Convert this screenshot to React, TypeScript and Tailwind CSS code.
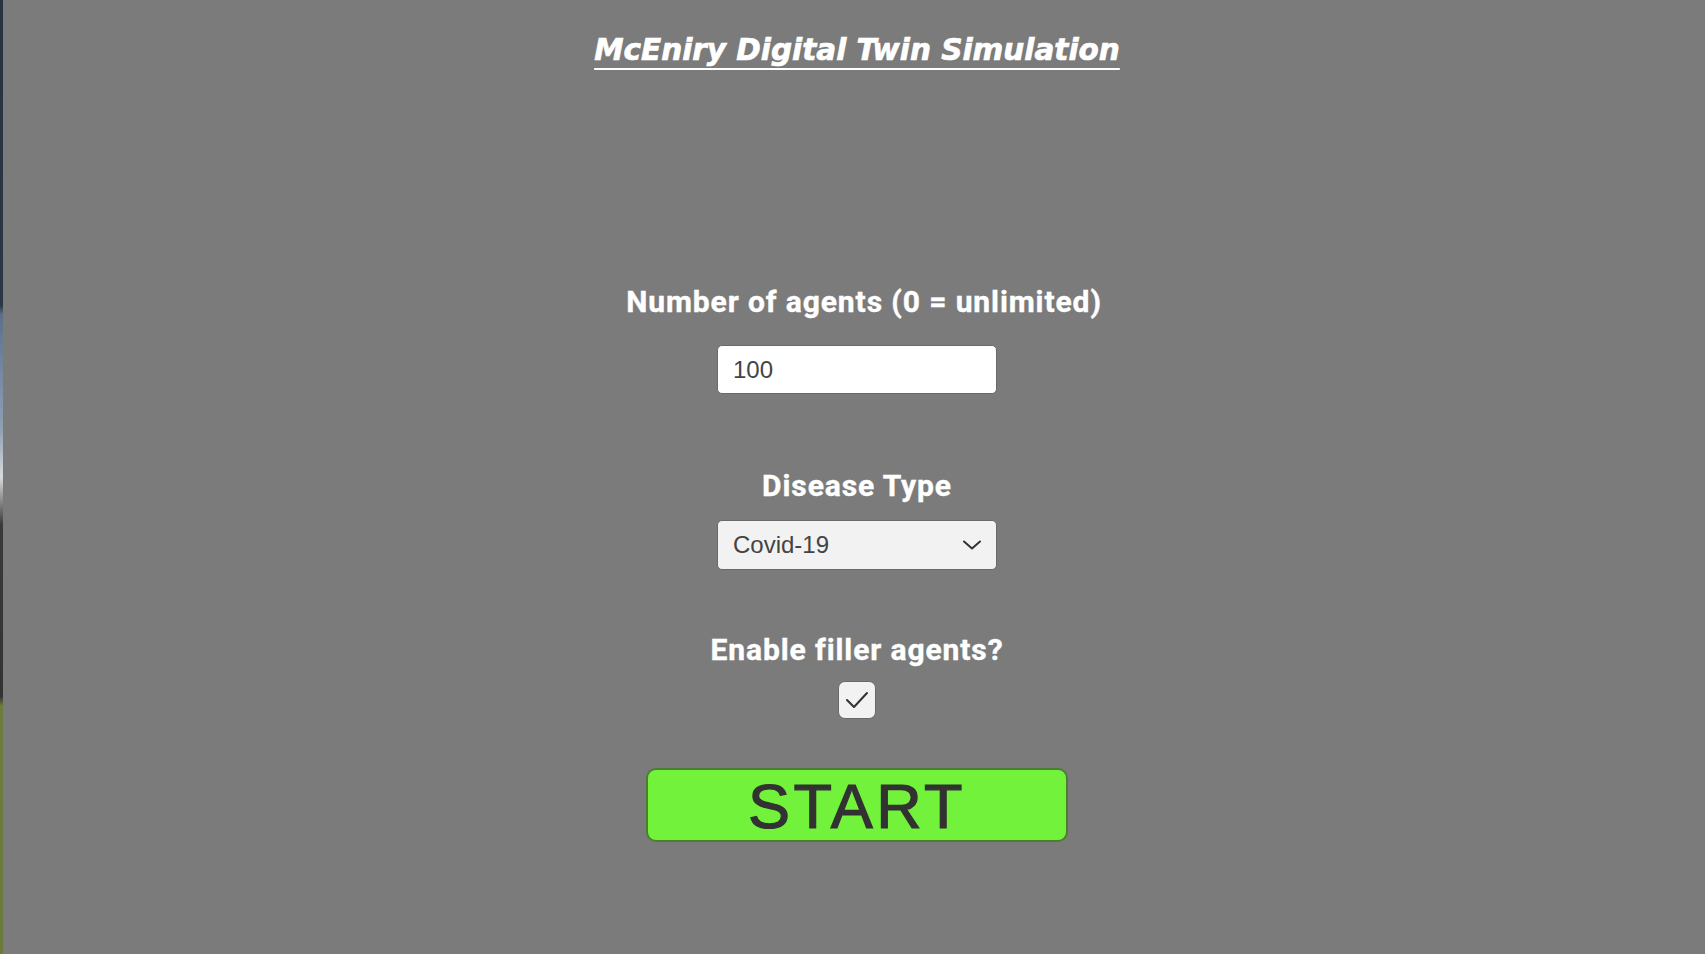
import React from "react";

export default function App() {
  return (
    <div className="flex h-[954px] w-full overflow-hidden bg-[#7b7b7b]">
      <div className="w-[3px] shrink-0 bg-[linear-gradient(to_bottom,#2a3340_0%,#2c3644_32%,#5d6f8a_33%,#8fa0b5_45%,#d8dadc_50%,#3a3a3a_55%,#333333_73%,#6e7d3e_74%,#6a7a3a_100%)]" />
      <div className="flex flex-1 flex-col items-center pl-[6px]">
        <h1 className="mt-[34px] text-[29.5px] leading-[33px] font-bold italic text-white underline decoration-2 underline-offset-[8px] [-webkit-text-stroke:0.7px_white] [font-family:'DejaVu_Sans',sans-serif]">
          McEniry Digital Twin Simulation
        </h1>

        <div className="mt-[218px] pl-[14px] text-[30px] leading-[34px] font-bold text-white tracking-[0.9px] [-webkit-text-stroke:0.4px_white] [font-family:Roboto,sans-serif]">
          Number of agents (0 = unlimited)
        </div>
        <div className="mt-[26px] flex h-[49px] w-[280px] items-center rounded-[5px] border border-[#6a6a6a] bg-white pl-[15px] text-[24px] text-[#444444] [font-family:'Liberation_Sans',Arial,sans-serif]">
          100
        </div>

        <div className="mt-[75px] text-[30px] leading-[34px] font-bold text-white tracking-[0.9px] [-webkit-text-stroke:0.4px_white] [font-family:Roboto,sans-serif]">
          Disease Type
        </div>
        <div className="mt-[17px] flex h-[50px] w-[280px] items-center justify-between rounded-[5px] border border-[#6a6a6a] bg-[#f2f2f2] pl-[15px] pr-[15px] text-[24px] text-[#444444] [font-family:'Liberation_Sans',Arial,sans-serif]">
          <span>Covid-19</span>
          <svg width="18" height="10" viewBox="0 0 18 10" fill="none">
            <path d="M1 1.5 L9 8.5 L17 1.5" stroke="#323232" strokeWidth="2" strokeLinecap="round" strokeLinejoin="round" />
          </svg>
        </div>

        <div className="mt-[63px] text-[30px] leading-[34px] font-bold text-white tracking-[0.9px] [-webkit-text-stroke:0.4px_white] [font-family:Roboto,sans-serif]">
          Enable filler agents?
        </div>
        <div className="mt-[14px] flex h-[38px] w-[38px] items-center justify-center rounded-[7px] border border-[#6a6a6a] bg-[#f2f2f2]">
          <svg width="24" height="20" viewBox="0 0 24 20" fill="none">
            <path d="M2 10 L9 17 L22 3" stroke="#323232" strokeWidth="2" strokeLinecap="round" strokeLinejoin="round" />
          </svg>
        </div>

        <button className="mt-[49px] flex h-[74px] w-[422px] items-center justify-center rounded-[10px] border-2 border-[#4a7f31] bg-[#72f23a] pt-[2px] text-[63px] leading-none tracking-[3.5px] text-[#323232] [-webkit-text-stroke:1.2px_#323232] [font-family:'Liberation_Sans',Arial,sans-serif]">
          START
        </button>
      </div>
    </div>
  );
}
